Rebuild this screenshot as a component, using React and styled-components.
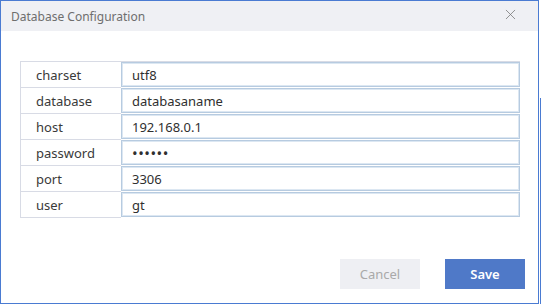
import React from 'react'
import styled, { createGlobalStyle } from 'styled-components'
import { X } from 'lucide-react'

const GlobalStyle = createGlobalStyle`
    html, body {
        margin: 0;
        padding: 0;
        background: #fff;
    }
    body {
        font-family: 'Noto Sans', 'Open Sans', sans-serif;
        font-size: 13px;
    }
`

const Page = styled.div`
    display: flex;
    width: 541px;
    height: 304px;
    overflow: hidden;
`

const Dialog = styled.div`
    width: 539px;
    height: 304px;
    box-sizing: border-box;
    border: 1px solid #4a7bd2;
    display: flex;
    flex-direction: column;
    background: #fff;
`

const Backdrop = styled.div`
    flex: 1;
    display: flex;
    flex-direction: column;
    padding-top: 98px;

    .accent {
        flex: 1;
        margin-left: 1px;
        background: #4a7bd2;
    }
`

const Header = styled.div`
    height: 30px;
    background: #eff0f4;
    display: flex;
    align-items: center;
    justify-content: space-between;
    padding: 0 19px 0 10px;
`

const Title = styled.span`
    color: #6e6e6e;
    font-size: 12px;
`

const Close = styled.button`
    border: none;
    background: none;
    padding: 0;
    display: flex;
    color: #777;
    margin-top: -3px;
`

const Body = styled.div`
    flex: 1;
    padding: 30px 19px 0 19px;
    display: flex;
    flex-direction: column;
`

const Table = styled.div`
    display: grid;
    grid-template-columns: 100px 1fr;
    border-top: 1px solid #d8dbe5;
    border-left: 1px solid #d8dbe5;
    width: 499px;
`

const Label = styled.div`
    height: 25px;
    border-bottom: 1px solid #d8dbe5;
    display: flex;
    align-items: center;
    padding-left: 15px;
    color: #3a3a3a;
`

const Cell = styled.div`
    height: 26px;
    display: flex;
    align-items: stretch;
    padding-bottom: 1px;
    box-sizing: border-box;
`

const Input = styled.input`
    flex: 1;
    min-width: 0;
    box-sizing: border-box;
    border: 1px solid #b7cbe0;
    box-shadow: inset 0 0 0 1px #dce7f2;
    outline: none;
    padding: 0 0 0 10px;
    font-family: inherit;
    font-size: ${p => (p.type === 'password' ? '15px' : '13px')};
    color: #2f2f2f;
    letter-spacing: ${p => (p.type === 'password' ? '0.5px' : 'normal')};
`

const Footer = styled.div`
    display: flex;
    justify-content: flex-end;
    gap: 25px;
    padding: 0 13px 14px 0;
    margin-top: auto;
`

const Button = styled.button`
    width: 80px;
    height: 30px;
    border: none;
    font-family: inherit;
    font-size: 13px;
    background: ${p => (p.primary ? '#4f79c8' : '#eeeff3')};
    color: ${p => (p.primary ? '#fff' : '#a9a9a9')};
    font-weight: ${p => (p.primary ? 600 : 400)};
`

const fields = [
    { name: 'charset', value: 'utf8' },
    { name: 'database', value: 'databasaname' },
    { name: 'host', value: '192.168.0.1' },
    { name: 'password', value: '123456', type: 'password' },
    { name: 'port', value: '3306' },
    { name: 'user', value: 'gt' },
]

const App = () => (
    <Page>
        <GlobalStyle />
        <Dialog>
            <Header>
                <Title>Database Configuration</Title>
                <Close>
                    <X size={17} strokeWidth={1.1} />
                </Close>
            </Header>
            <Body>
                <Table>
                    {fields.map(f => (
                        <React.Fragment key={f.name}>
                            <Label>{f.name}</Label>
                            <Cell>
                                <Input type={f.type || 'text'} defaultValue={f.value} />
                            </Cell>
                        </React.Fragment>
                    ))}
                </Table>
            </Body>
            <Footer>
                <Button>Cancel</Button>
                <Button primary>Save</Button>
            </Footer>
        </Dialog>
        <Backdrop>
            <div className='accent' />
        </Backdrop>
    </Page>
)

export default App
